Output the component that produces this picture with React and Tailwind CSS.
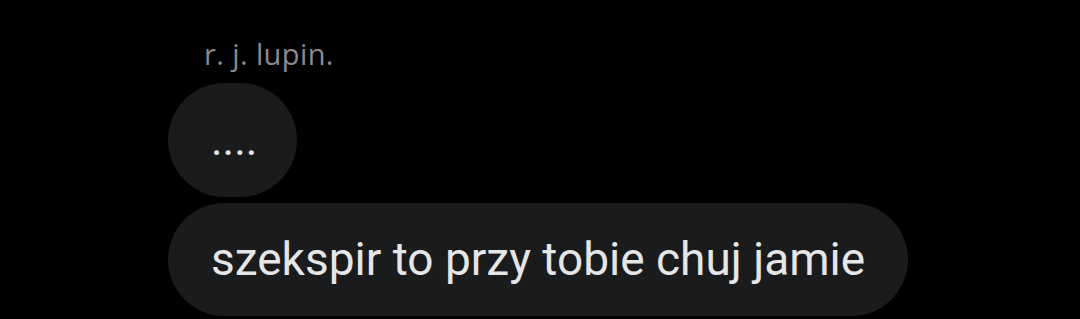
export default function App() {
  return (
    <div className="w-[1080px] h-[319px] bg-black overflow-hidden" style={{ fontFamily: 'Roboto, "Noto Sans", sans-serif' }}>
      <div className="pl-[168px] pt-[36px] flex flex-col items-start">
        <div className="pl-[36px] text-[29px] leading-[36px] tracking-[0.4px] text-[#8a8b8d]" style={{ fontFamily: '"Open Sans", sans-serif' }}>
          r. j. lupin.
        </div>
        <div className="mt-[11px] h-[114px] w-[129px] rounded-[57px] bg-[#1a1b1d] flex items-center pl-[43px] text-[44px] text-[#e6e6e6]">
          ....
        </div>
        <div className="mt-[6px] h-[113px] rounded-[57px] bg-[#1a1b1d] flex items-center px-[43px] text-[46px] text-[#e6e6e6]">
          szekspir to przy tobie chuj jamie
        </div>
      </div>
    </div>
  )
}
